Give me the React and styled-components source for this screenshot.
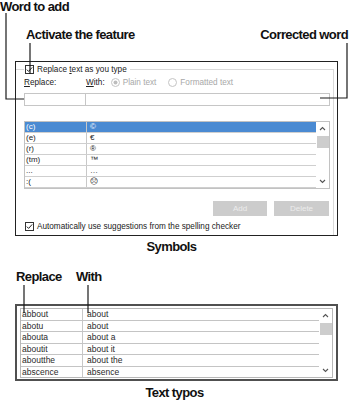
import React from 'react';
import styled, { createGlobalStyle } from 'styled-components';

const Global = createGlobalStyle`
  html, body { margin: 0; padding: 0; background: #fff; }
  body { width: 349px; height: 400px; overflow: hidden; }
  * { box-sizing: border-box; }
`;

const Page = styled.div`
  position: relative;
  width: 349px;
  height: 400px;
  background: #fff;
  font-family: "Liberation Sans", Arial, sans-serif;
  color: #1a1a1a;
  display: flex;
  flex-direction: column;
`;

const Callout = styled.div`
  font-family: "Liberation Sans", Arial, sans-serif;
  font-weight: 700;
  font-size: 13px;
  line-height: 14px;
  height: 14px;
  letter-spacing: -0.6px;
  color: #111;
  white-space: nowrap;
`;

const TopCallout = styled(Callout)`
  line-height: 12px;
  height: 12px;
  padding-top: 1px;
  box-sizing: content-box;
`;

const CalloutRow = styled.div`
  display: flex;
  justify-content: space-between;
  margin-top: 15px;
  padding: 0 1px 0 26px;
`;

const Caption = styled(Callout)`
  margin-top: ${(p) => p.$mt}px;
  text-align: center;
  padding-right: ${(p) => p.$shift || 0}px;
`;

const Overlay = styled.svg`
  position: absolute;
  left: 0;
  top: 0;
  pointer-events: none;
`;

/* ---------- dialog ---------- */

const Dialog = styled.div`
  margin: 19px 0 0 15px;
  width: 323px;
  height: 175px;
  border: 1px solid #222;
  padding: 0 3px 0 0;
  display: flex;
  flex-direction: column;
  font-size: 8.2px;
  color: #222;
`;

const GroupBox = styled.div`
  margin-top: 7px;
  flex: 1;
  border-top: 1px solid #dadada;
  border-right: 1px solid #dadada;
  padding: 0 3px 0 8px;
  display: flex;
  flex-direction: column;
`;

const Legend = styled.div`
  margin-top: -8px;
  height: 14px;
  align-self: flex-start;
  display: flex;
  align-items: center;
  gap: 3px;
  padding: 0 3px 0 1px;
  background: #fff;
  white-space: nowrap;
`;

const U = styled.span`
  text-decoration: underline;
  text-underline-offset: 1px;
`;

const LabelRow = styled.div`
  height: 13px;
  display: flex;
  align-items: center;
  white-space: nowrap;
`;

const ReplaceLabel = styled.div`
  width: 62px;
`;

const WithGroup = styled.div`
  display: flex;
  align-items: center;
`;

const RadioItem = styled.div`
  display: flex;
  align-items: center;
  gap: 3px;
  margin-left: ${(p) => p.$ml}px;
  color: #a8a8a8;
`;

const FieldRow = styled.div`
  margin-top: 4px;
  height: 13px;
  display: flex;
`;

const Field = styled.div`
  height: 13px;
  border: 1px solid #c6c6c6;
  width: ${(p) => (p.$w ? `${p.$w}px` : 'auto')};
  flex: ${(p) => (p.$w ? '0 0 auto' : '1')};
  margin-left: ${(p) => (p.$w ? 0 : -1)}px;
`;

const ListBox = styled.div`
  margin-top: 15px;
  height: 68px;
  border: 1px solid #c2c2c2;
  display: flex;
`;

const Rows = styled.div`
  flex: 1;
  display: flex;
  flex-direction: column;
`;

const SymRow = styled.div`
  height: 11px;
  display: grid;
  grid-template-columns: 62px 1fr;
  border-bottom: 1px solid #cfcfcf;
  background: ${(p) => (p.$sel ? '#4a8ad2' : '#fff')};
  color: ${(p) => (p.$sel ? '#fff' : '#222')};
  line-height: 10px;
  font-size: 8px;
`;

const Cell = styled.div`
  padding-left: ${(p) => p.$pl}px;
  border-right: ${(p) => (p.$div ? '1px solid #c8c8c8' : 'none')};
  font-family: ${(p) => (p.$sym ? '"DejaVu Sans", sans-serif' : 'inherit')};
  overflow: hidden;
  white-space: nowrap;
`;

const Scroll = styled.div`
  width: 13px;
  display: flex;
  flex-direction: column;
  align-items: center;
  background: #fff;
`;

const Arrow = styled.div`
  width: 13px;
  height: ${(p) => p.$h}px;
  display: flex;
  align-items: center;
  justify-content: center;
`;

const Thumb = styled.div`
  width: 12px;
  height: 12px;
  margin-top: 1px;
  background: #cdcdcd;
`;

const Spacer = styled.div`
  flex: 1;
`;

const ButtonRow = styled.div`
  margin-top: 12px;
  display: flex;
  justify-content: flex-end;
  gap: 7px;
  padding-right: 1px;
`;

const Btn = styled.div`
  width: ${(p) => p.$w}px;
  height: 15px;
  background: #cccccc;
  color: #ececec;
  font-size: 8px;
  display: flex;
  align-items: center;
  justify-content: center;
`;

const CheckRow = styled.div`
  margin-top: 3px;
  height: 14px;
  display: flex;
  align-items: center;
  gap: 3px;
  padding-left: 1px;
  white-space: nowrap;
`;

/* ---------- typo table ---------- */

const HeadRow = styled.div`
  margin-top: 16px;
  display: grid;
  grid-template-columns: 60px auto;
  padding-left: 16px;
`;

const TypoFrame = styled.div`
  margin: 20px 0 0 15px;
  width: 323px;
  height: 77px;
  border: 2px solid #505050;
  padding: 2px 3px 1px 3px;
  display: flex;
`;

const TypoInner = styled.div`
  flex: 1;
  border: 1px solid #b8b8b8;
  display: flex;
`;

const TypoRows = styled.div`
  flex: 1;
  display: flex;
  flex-direction: column;
`;

const TypoRow = styled.div`
  flex: 1;
  display: grid;
  grid-template-columns: 62px 1fr;
  border-bottom: ${(p) => (p.$last ? 'none' : '1px solid #c4c4c4')};
  font-size: 8.5px;
  color: #2a2a2a;
  align-items: center;
`;

const TypoCell = styled.div`
  padding-left: ${(p) => p.$pl}px;
  height: 100%;
  display: flex;
  align-items: center;
  border-right: ${(p) => (p.$div ? '1px solid #c8c8c8' : 'none')};
  white-space: nowrap;
`;

const CheckBox = () => (
  <svg width="9" height="9" viewBox="0 0 9 9">
    <rect x="0.5" y="0.5" width="8" height="8" fill="#fff" stroke="#333" />
    <polyline points="1.8,4.6 3.6,6.4 7.2,2.4" fill="none" stroke="#222" strokeWidth="1" />
  </svg>
);

const Radio = ({ on }) => (
  <svg width="9" height="9" viewBox="0 0 9 9">
    <circle cx="4.5" cy="4.5" r="4" fill="#fff" stroke="#c4c4c4" />
    {on && <circle cx="4.5" cy="4.5" r="2" fill="#bdbdbd" />}
  </svg>
);

const Chevron = ({ down }) => (
  <svg width="7" height="5" viewBox="0 0 7 5">
    <polyline
      points={down ? '1,1 3.5,3.5 6,1' : '1,4 3.5,1.5 6,4'}
      fill="none"
      stroke="#555"
      strokeWidth="1.1"
    />
  </svg>
);

const symbols = [
  ['(c)', '©'],
  ['(e)', '€'],
  ['(r)', '®'],
  ['(tm)', '™'],
  ['...', '…'],
  [':(', '☹'],
];

const typos = [
  ['abbout', 'about'],
  ['abotu', 'about'],
  ['abouta', 'about a'],
  ['aboutit', 'about it'],
  ['aboutthe', 'about the'],
  ['abscence', 'absence'],
];

export default function App() {
  return (
    <Page>
      <Global />
      <TopCallout>Word to add</TopCallout>
      <CalloutRow>
        <Callout>Activate the feature</Callout>
        <Callout>Corrected word</Callout>
      </CalloutRow>

      <Dialog>
        <GroupBox>
          <Legend>
            <CheckBox />
            <span>
              Replace <U>t</U>ext as you type
            </span>
          </Legend>
          <LabelRow>
            <ReplaceLabel>
              <U>R</U>eplace:
            </ReplaceLabel>
            <WithGroup>
              <span>
                <U>W</U>ith:
              </span>
              <RadioItem $ml={6}>
                <Radio on />
                <span>Plain text</span>
              </RadioItem>
              <RadioItem $ml={12}>
                <Radio />
                <span>Formatted text</span>
              </RadioItem>
            </WithGroup>
          </LabelRow>
          <FieldRow>
            <Field $w={62} />
            <Field />
          </FieldRow>
          <ListBox>
            <Rows>
              {symbols.map(([a, b], i) => (
                <SymRow key={a} $sel={i === 0}>
                  <Cell $pl={1} $div>
                    {a}
                  </Cell>
                  <Cell $pl={3} $sym={i === 5}>
                    {b}
                  </Cell>
                </SymRow>
              ))}
            </Rows>
            <Scroll>
              <Arrow $h={13}>
                <Chevron />
              </Arrow>
              <Thumb />
              <Spacer />
              <Arrow $h={13}>
                <Chevron down />
              </Arrow>
            </Scroll>
          </ListBox>
          <ButtonRow>
            <Btn $w={54}>Add</Btn>
            <Btn $w={55}>Delete</Btn>
          </ButtonRow>
          <CheckRow>
            <CheckBox />
            <span>Automatically use suggestions from the spelling checker</span>
          </CheckRow>
        </GroupBox>
      </Dialog>

      <Caption $mt={4} $shift={6}>
        Symbols
      </Caption>

      <HeadRow>
        <Callout>Replace</Callout>
        <Callout>With</Callout>
      </HeadRow>

      <TypoFrame>
        <TypoInner>
          <TypoRows>
            {typos.map(([a, b], i) => (
              <TypoRow key={a} $last={i === typos.length - 1}>
                <TypoCell $pl={1} $div>
                  {a}
                </TypoCell>
                <TypoCell $pl={4}>{b}</TypoCell>
              </TypoRow>
            ))}
          </TypoRows>
          <Scroll>
            <Arrow $h={13}>
              <Chevron />
            </Arrow>
            <Thumb />
            <Spacer />
            <Arrow $h={13}>
              <Chevron down />
            </Arrow>
          </Scroll>
        </TypoInner>
      </TypoFrame>

      <Caption $mt={5} $shift={0}>
        Text typos
      </Caption>

      <Overlay width="349" height="400" viewBox="0 0 349 400">
        <g fill="none" stroke="#1a1a1a" strokeWidth="1.2">
          <polyline points="6,13 6,99 24,99" />
          <polyline points="30,43 30,74" />
          <polyline points="347,43 347,98 320,98" />
          <polyline points="24,285 24,313" />
          <polyline points="88,285 88,313" />
        </g>
      </Overlay>
    </Page>
  );
}
